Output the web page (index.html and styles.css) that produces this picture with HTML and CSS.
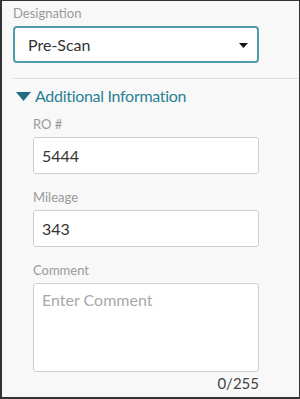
FILE: index.html
```html
<!DOCTYPE html>
<html lang="en">
<head>
    <meta charset="UTF-8">
    <meta name="viewport" content="width=device-width, initial-scale=1.0">
    <title>Designation</title>
    <link rel="stylesheet" href="styles.css">
</head>
<body>

<div class="panel">
    <div class="field top-field">
        <label>Designation</label>
        <div class="select-box">
            <span>Pre-Scan</span>
            <svg class="caret" width="9" height="5" viewBox="0 0 9 5"><path d="M0 0h9L4.5 5z" fill="#111"/></svg>
        </div>
    </div>

    <div class="divider"></div>

    <div class="section-head">
        <svg class="toggle" width="15" height="9" viewBox="0 0 15 9"><path d="M0 0h15L7.5 9z" fill="#1f6f84"/></svg>
        <span>Additional Information</span>
    </div>

    <div class="section-body">
        <div class="field">
            <label>RO #</label>
            <input type="text" value="5444">
        </div>
        <div class="field">
            <label>Mileage</label>
            <input type="text" value="343">
        </div>
        <div class="field">
            <label>Comment</label>
            <textarea placeholder="Enter Comment"></textarea>
            <div class="counter">0/255</div>
        </div>
    </div>
</div>

</body>
</html>
```

FILE: styles.css
```css
body {
    margin: 0;
    font-family: Lato, "Open Sans", sans-serif;
}
.panel {
    width: 300px;
    height: 399px;
    box-sizing: border-box;
    border-style: solid;
    border-color: #333;
    border-width: 1px 1px 2px 2px;
    background-color: #f8f8f8;
    padding: 3px 0 0 11px;
    overflow: hidden;
}
.field {
    display: flex;
    flex-direction: column;
    width: 226px;
    margin-bottom: 14px;
}
.top-field {
    width: 246px;
    margin-bottom: 15px;
}
label {
    font-size: 13px;
    line-height: 18px;
    color: #9a9a9a;
    margin-bottom: 4px;
}
.select-box {
    height: 37px;
    box-sizing: border-box;
    border: 2px solid #4d9bab;
    border-radius: 4px;
    background-color: #fff;
    display: flex;
    align-items: center;
    justify-content: space-between;
    padding: 0 9px 0 13px;
    font-size: 16px;
    color: #333;
}
.caret {
    margin-top: 1px;
}
.divider {
    height: 1px;
    background-color: #dedede;
    margin-bottom: 5px;
}
.section-head {
    display: flex;
    align-items: center;
    gap: 4px;
    padding-left: 3px;
    font-size: 16px;
    letter-spacing: -0.3px;
    line-height: 24px;
    color: #2b7f95;
    margin-bottom: 7px;
}
.section-body {
    padding-left: 20px;
}
input, textarea {
    box-sizing: border-box;
    width: 226px;
    border: 1px solid #cfcfcf;
    border-radius: 3px;
    background-color: #fff;
    font-family: Lato, "Open Sans", sans-serif;
    font-size: 16px;
    color: #333;
    padding: 0 8px;
    margin: 0;
}
input {
    height: 37px;
}
textarea {
    height: 89px;
    padding-top: 6px;
    resize: none;
}
textarea::placeholder {
    color: #a8a8a8;
}
.counter {
    text-align: right;
    font-size: 15px;
    line-height: 20px;
    color: #444;
    margin-top: 1px;
}
```
